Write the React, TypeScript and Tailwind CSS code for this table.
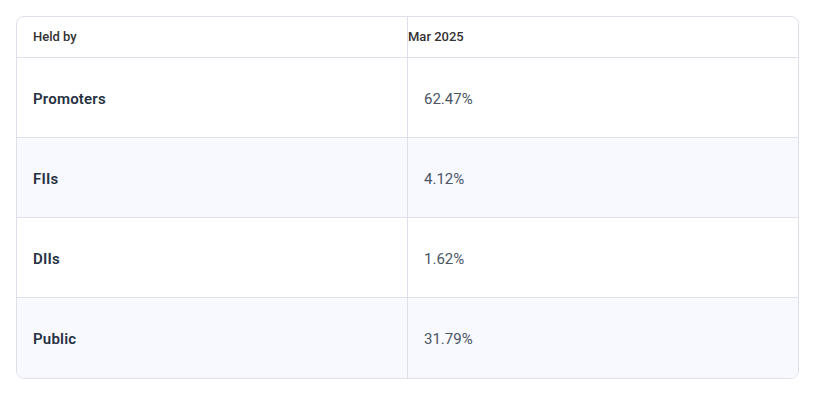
import * as React from 'react';

const rows = [
    { holder: 'Promoters', value: '62.47%' },
    { holder: 'FIIs', value: '4.12%' },
    { holder: 'DIIs', value: '1.62%' },
    { holder: 'Public', value: '31.79%' },
];

export default function App() {
    return (
        <div
            className="w-[817px] h-[403px] bg-white overflow-hidden"
            style={{ fontFamily: 'Roboto, "Noto Sans", sans-serif' }}
        >
            {/* heading sits above the crop, only its descenders peek in */}
            <div className="h-[16px] overflow-hidden px-[14px]">
                <h2 className="-mt-[28px] text-[26px] font-bold leading-[28px] text-[#1e2b45] whitespace-nowrap">
                    Why Investors Watch Closely
                </h2>
            </div>

            <div className="mx-[16px] w-[783px] rounded-[8px] border border-[#e0e0ec] overflow-hidden">
                <div className="grid grid-cols-[391px_1fr] h-[41px] border-b border-[#e0e0ec] text-[13px] font-medium text-[#333333]">
                    <div className="flex items-center pl-[16px] border-r border-[#e0e0ec]">Held by</div>
                    <div className="flex items-center">Mar 2025</div>
                </div>
                {rows.map((row, i) => (
                    <div
                        key={row.holder}
                        className={
                            'grid grid-cols-[391px_1fr] h-[80px] ' +
                            (i < rows.length - 1 ? 'border-b border-[#e0e0ec] ' : '') +
                            (i % 2 === 1 ? 'bg-[#f8f9fe]' : 'bg-white')
                        }
                    >
                        <div className="flex items-center pl-[16px] pt-[3px] border-r border-[#e0e0ec] text-[15px] font-semibold tracking-[0.2px] text-[#263142]">
                            {row.holder}
                        </div>
                        <div className="flex items-center pl-[16px] pt-[3px] text-[15px] text-[#4b5565]">
                            {row.value}
                        </div>
                    </div>
                ))}
            </div>
        </div>
    );
}
